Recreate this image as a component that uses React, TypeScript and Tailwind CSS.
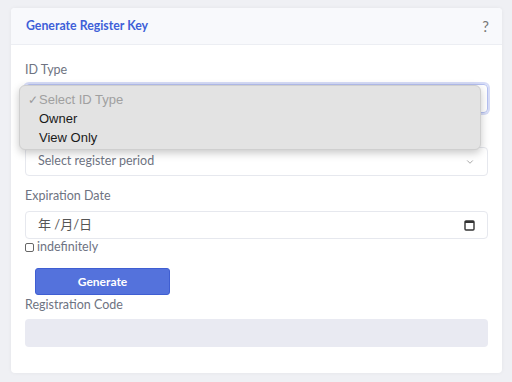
import { ChevronDown } from 'lucide-react';

const idOptions = [
  { label: 'Select ID Type', checked: true },
  { label: 'Owner', checked: false },
  { label: 'View Only', checked: false },
];

function Label({ children }: { children: React.ReactNode }) {
  return <div className="text-[12.5px] leading-5 text-[#6e7382]">{children}</div>;
}

function CalendarIcon() {
  return (
    <svg width="11" height="12" viewBox="0 0 11 12" fill="none">
      <rect x="1" y="2" width="9" height="9" rx="1" stroke="#333" strokeWidth="1.4" />
      <rect x="1" y="2" width="9" height="2" fill="#333" />
    </svg>
  );
}

export default function App() {
  return (
    <div
      className="min-h-[382px] bg-[#eff0f4] pt-2 pl-[11px] pr-[10px]"
      style={{ fontFamily: 'Lato, "Noto Sans CJK JP", sans-serif' }}
    >
      <div className="rounded-[4px] bg-white shadow-[0_0_4px_rgba(0,0,0,0.05)]">
        <div className="flex h-[37px] items-center justify-between rounded-t-[4px] border-b border-[#eceef3] bg-[#f8f9fc] pr-[13px] pl-[15px]">
          <span className="text-[12.3px] font-bold text-[#3e5fd8]">Generate Register Key</span>
          <span className="text-[15px] text-[#777]">?</span>
        </div>

        <div className="px-[14px] pt-[15px] pb-[26px]">
          <Label>ID Type</Label>
          <div className="relative mt-1">
            {/* select stays open, its own text is covered by the option list */}
            <div className="flex h-[29px] items-center justify-end rounded-[4px] border border-[#b5c0f0] px-3 ring-2 ring-[#d6dcf7]">
              <ChevronDown size={11} className="text-[#888]" />
            </div>
            <div
              className="absolute top-[1px] left-[-6px] w-[462px] rounded-[6px] border border-[#cfcfcf] bg-[#e3e3e3] pt-[4px] pb-[2px] text-[13px] shadow-[0_3px_8px_rgba(0,0,0,0.22)]"
              style={{ fontFamily: '"Liberation Sans", Arial, sans-serif' }}
            >
              {idOptions.map((o) => (
                <div key={o.label} className="flex h-[19px] items-center">
                  <span className="w-[19px] pl-[8px] text-[12px] text-[#9a9a9a]">{o.checked ? '✓' : ''}</span>
                  <span className={o.checked ? 'text-[#a0a0a0]' : 'text-[#1a1a1a]'}>{o.label}</span>
                </div>
              ))}
            </div>
          </div>

          <div className="mt-[34px] flex h-[29px] items-center justify-between rounded-[4px] border border-[#e6e8ee] px-3 text-[12.5px] text-[#6e7382]">
            <span>Select register period</span>
            <ChevronDown size={10} className="text-[#999]" />
          </div>

          <div className="mt-[10px]">
            <Label>Expiration Date</Label>
          </div>
          <div className="mt-[5px] flex h-[28px] items-center justify-between rounded-[4px] border border-[#e6e8ee] pr-[12px] pl-3 text-[13px] text-[#555]">
            <span>年 /月/日</span>
            <CalendarIcon />
          </div>
          <div className="flex h-[17px] items-center gap-[3px] text-[12.5px] text-[#6e7382]">
            <span className="inline-block h-[9px] w-[9px] rounded-[2px] border border-[#666]" />
            <span>indefinitely</span>
          </div>

          <button className="mt-[12px] ml-[10px] flex h-[27px] w-[135px] items-center justify-center rounded-[3px] border border-[#3f5ed2] bg-[#5472dc] text-[12px] font-bold text-white">
            Generate
          </button>
          <Label>Registration Code</Label>
          <div className="mt-[4px] h-[28px] rounded-[4px] bg-[#e9eaf2]" />
        </div>
      </div>
    </div>
  );
}
